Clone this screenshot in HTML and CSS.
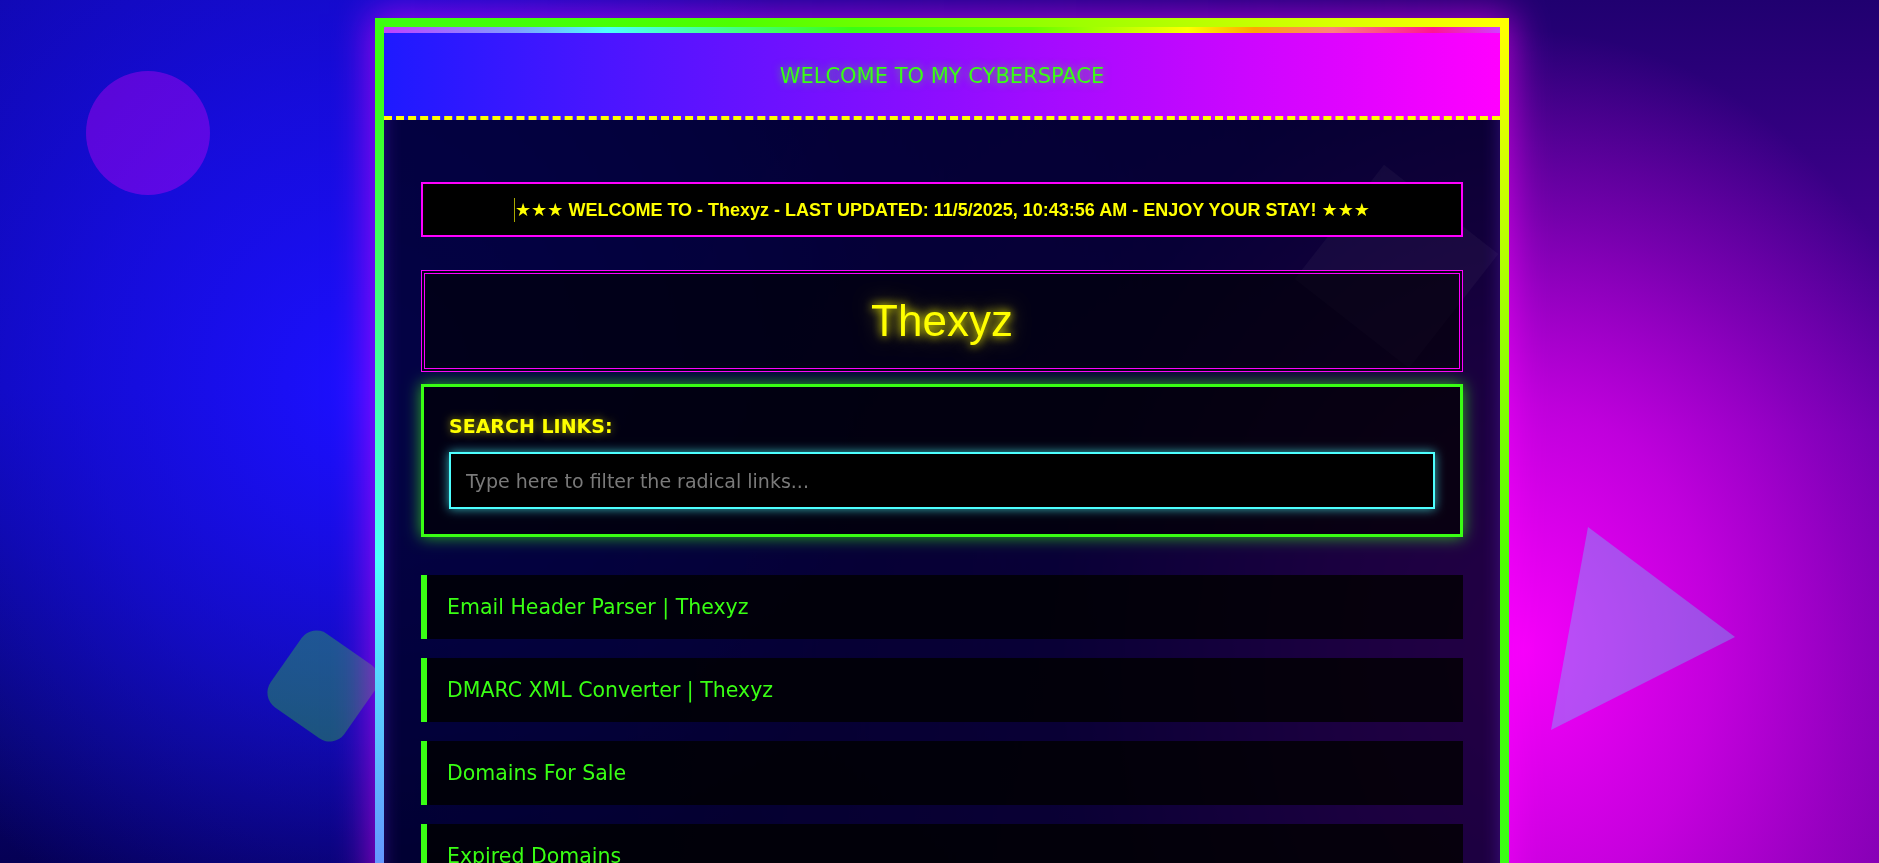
FILE: index.html
```html
<!DOCTYPE html>
<html lang="en">
<head>
<meta charset="utf-8">
<title>Thexyz - Welcome to my Cyberspace</title>
<link rel="stylesheet" href="styles.css">
</head>
<body>
<div class="backdrop">
  <div class="shape shape-circle"></div>
  <div class="shape shape-rounded"></div>
  <div class="shape shape-tri"></div>
</div>
<div class="page">
  <div class="frame">
    <div class="ghost"></div>
    <div class="rainbow"></div>
    <header class="top">
      <h1 class="top-title">WELCOME TO MY CYBERSPACE</h1>
    </header>
    <main class="content">
      <div class="ticker"><span class="caret"></span>★★★ WELCOME TO - Thexyz - LAST UPDATED: 11/5/2025, 10:43:56 AM - ENJOY YOUR STAY! ★★★</div>
      <div class="title-box">
        <h2 class="site-title">Thexyz</h2>
      </div>
      <section class="search">
        <label class="search-label" for="q">SEARCH LINKS:</label>
        <input class="search-input" id="q" type="text" placeholder="Type here to filter the radical links...">
      </section>
      <ul class="links">
        <li><a class="link" href="#">Email Header Parser | Thexyz</a></li>
        <li><a class="link" href="#">DMARC XML Converter | Thexyz</a></li>
        <li><a class="link" href="#">Domains For Sale</a></li>
        <li><a class="link" href="#">Expired Domains</a></li>
      </ul>
    </main>
  </div>
</div>
</body>
</html>
```

FILE: styles.css
```css
html {
  scrollbar-width: none;
  background: #0c08a8;
}

body {
  margin: 0;
  font-family: "DejaVu Sans", "Liberation Sans", sans-serif;
  color: #39ff14;
}

/* ---------- fixed background ---------- */
.backdrop {
  position: fixed;
  inset: 0;
  z-index: -1;
  overflow: hidden;
  background: linear-gradient(180deg, #1008b0 0%, #0c08a8 45%, #07066a 85%, #050055 100%);
}

.backdrop::before {
  content: "";
  position: absolute;
  inset: 0;
  background: linear-gradient(180deg, #200070 0%, #5a00a4 50%, #7000a8 100%);
  -webkit-mask-image: linear-gradient(90deg, transparent 22%, #000 78%);
  mask-image: linear-gradient(90deg, transparent 22%, #000 78%);
}

.backdrop::after {
  content: "";
  position: absolute;
  inset: 0;
  background:
    radial-gradient(ellipse 470px 620px at 1525px 650px, rgba(245, 0, 250, 1) 0%, rgba(245, 0, 250, 0.65) 40%, rgba(245, 0, 250, 0.3) 70%, rgba(245, 0, 250, 0) 100%),
    radial-gradient(ellipse 540px 600px at 360px 390px, rgba(28, 16, 255, 1) 0%, rgba(28, 16, 255, 0.55) 50%, rgba(28, 16, 255, 0) 100%);
}

.shape {
  position: absolute;
  z-index: 1;
}

.shape-circle {
  left: 86px;
  top: 71px;
  width: 124px;
  height: 124px;
  border-radius: 50%;
  background: rgba(255, 0, 255, 0.3);
}

.shape-rounded {
  left: 278px;
  top: 641px;
  width: 90px;
  height: 90px;
  border-radius: 18px;
  transform: rotate(35deg);
  background: rgba(57, 255, 20, 0.3);
}

.shape-tri {
  left: 1551px;
  top: 527px;
  width: 184px;
  height: 203px;
  clip-path: polygon(37px 0, 184px 110px, 0 203px);
  background: rgba(77, 255, 255, 0.3);
}

/* ---------- main frame ---------- */
.page {
  display: flex;
  justify-content: center;
  padding: 18px 0 0 5px;
}

.frame {
  position: relative;
  width: 1134px;
  box-sizing: border-box;
  border: 9px solid transparent;
  border-image: linear-gradient(35deg, #6a80ff 0%, #4dffff 22%, #39ff14 50%, #4dff00 68%, #ffff00 100%) 1;
  background: rgba(0, 0, 38, 0.86);
  background-clip: padding-box;
  box-shadow: 0 0 35px 4px rgba(255, 0, 255, 0.6), inset 0 0 18px rgba(120, 40, 255, 0.35);
}

.ghost {
  position: absolute;
  left: 940px;
  top: 167px;
  width: 145px;
  height: 145px;
  transform: rotate(38deg);
  background: rgba(255, 255, 255, 0.035);
  z-index: 0;
}

.rainbow {
  height: 6px;
  background: linear-gradient(90deg, #c040ff 0%, #7fa0ff 12%, #4dffff 20%, #39ff14 42%, #66ff00 58%, #ffff00 72%, #ffa500 78%, #ff7f7f 85%, #ff1493 94%, #d040ff 100%);
}

.top {
  background: linear-gradient(90deg, #1e1aff 0%, #8e0dff 50%, #ff00ff 100%);
  border-bottom: 4px dashed #ffff00;
  padding: 31px 0 27px;
  text-align: center;
}

.top-title {
  margin: 0;
  font-size: 21px;
  line-height: 25px;
  font-weight: normal;
  color: #39ff14;
  text-shadow: 0 0 8px rgba(57, 255, 20, 0.7);
}

.content {
  position: relative;
  z-index: 1;
  padding: 62px 37px 40px;
}

/* ---------- ticker ---------- */
.ticker {
  height: 55px;
  box-sizing: border-box;
  border: 2px solid #ff00ff;
  background: #000;
  display: flex;
  align-items: center;
  justify-content: center;
  font-family: "Liberation Sans", "DejaVu Sans", sans-serif;
  font-weight: bold;
  font-size: 18px;
  color: #ffff00;
  white-space: nowrap;
}

.caret {
  display: inline-block;
  width: 1px;
  height: 24px;
  background: #a8a800;
}

/* ---------- title ---------- */
.title-box {
  margin-top: 33px;
  height: 102px;
  box-sizing: border-box;
  border: 4px double #ff00ff;
  background: rgba(0, 0, 0, 0.6);
  display: flex;
  align-items: center;
  justify-content: center;
}

.site-title {
  margin: 0;
  font-family: "Liberation Sans", "DejaVu Sans", sans-serif;
  font-size: 44px;
  font-weight: normal;
  color: #ffff00;
  text-shadow: 0 0 10px #ffff00, 0 0 20px rgba(255, 255, 0, 0.5);
}

/* ---------- search ---------- */
.search {
  margin-top: 12px;
  border: 3px solid #39ff14;
  background: rgba(0, 0, 0, 0.7);
  box-shadow: 0 0 15px rgba(57, 255, 20, 0.7);
  padding: 25px;
}

.search-label {
  display: block;
  font-size: 19px;
  font-weight: bold;
  line-height: 28px;
  margin-bottom: 12px;
  color: #ffff00;
  text-shadow: 0 0 8px rgba(255, 255, 0, 0.6);
}

.search-input {
  display: block;
  width: 100%;
  height: 57px;
  box-sizing: border-box;
  border: 2px solid #4dffff;
  background: #000;
  color: #fff;
  font-family: "DejaVu Sans", sans-serif;
  font-size: 19px;
  padding: 0 15px;
  outline: none;
  box-shadow: 0 0 10px rgba(77, 255, 255, 0.7);
}

.search-input::placeholder {
  color: #7a7a7a;
}

/* ---------- links ---------- */
.links {
  list-style: none;
  margin: 38px 0 0;
  padding: 0;
  display: flex;
  flex-direction: column;
  gap: 19px;
}

.link {
  display: block;
  height: 64px;
  box-sizing: border-box;
  border-left: 6px solid #39ff14;
  background: rgba(0, 0, 0, 0.8);
  padding: 0 20px;
  line-height: 64px;
  font-size: 20.5px;
  color: #39ff14;
  text-decoration: none;
}
```
